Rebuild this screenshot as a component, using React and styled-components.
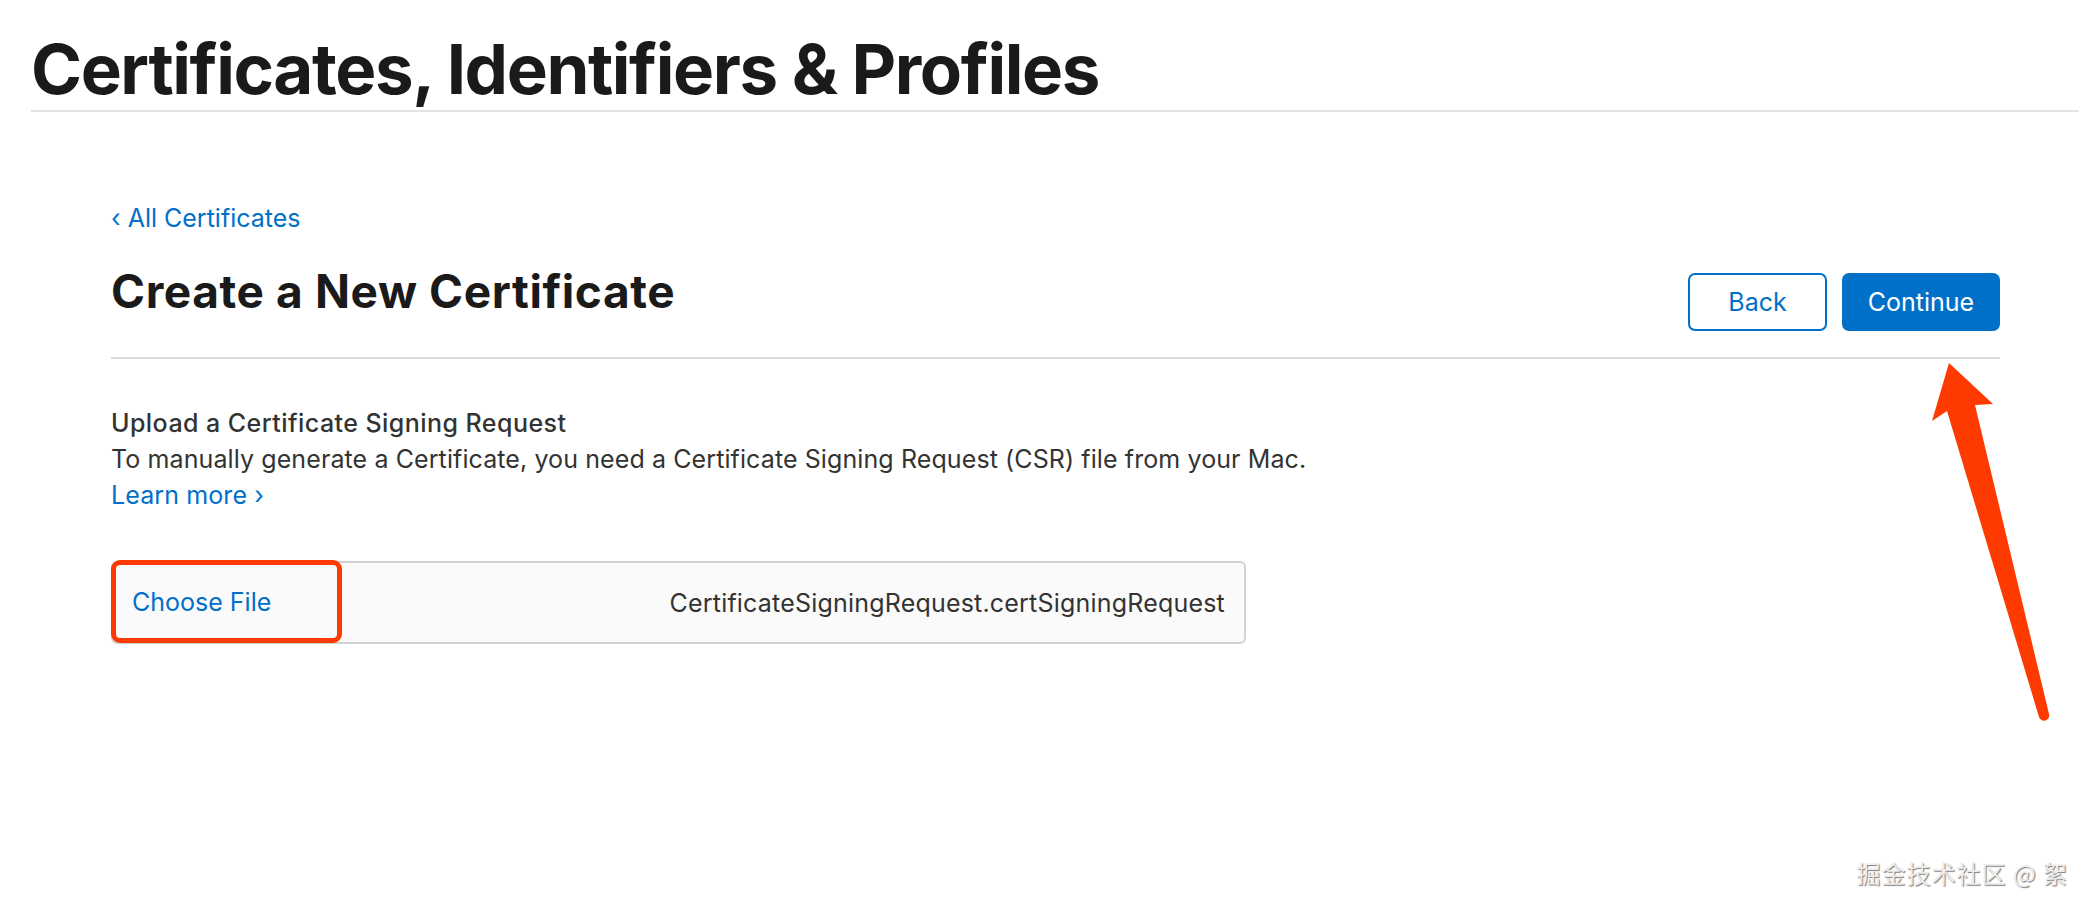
import React from "react";
import styled, { createGlobalStyle } from "styled-components";

const GlobalStyle = createGlobalStyle`
  body {
    margin: 0;
    background: #fff;
    font-family: "Inter", "Noto Sans", sans-serif;
    color: #333;
  }
`;

const Page = styled.div`
  position: relative;
  width: 2092px;
  height: 914px;
  overflow: hidden;
`;

const Header = styled.header`
  margin: 0 13px 0 31px;
  padding-top: 28px;
  border-bottom: 2px solid #e4e4e4;
`;

const PageTitle = styled.h1`
  margin: 0;
  font-size: 69px;
  line-height: 82px;
  font-weight: 700;
  color: #1a1a1a;
  letter-spacing: -1.4px;
`;

const Main = styled.main`
  padding: 0 92px 0 111px;
`;

const BackLink = styled.a`
  display: inline-block;
  margin-top: 88px;
  font-size: 25px;
  line-height: 36px;
  color: #0070c9;
  text-decoration: none;
`;

const TitleRow = styled.div`
  display: flex;
  justify-content: space-between;
  align-items: flex-end;
  margin-top: 27px;
  padding-bottom: 26px;
  border-bottom: 2px solid #dcdcdc;
`;

const SectionTitle = styled.h2`
  margin: 0 0 12px;
  font-size: 46px;
  line-height: 56px;
  font-weight: 700;
  color: #1a1a1a;
  letter-spacing: 0.6px;
`;

const Buttons = styled.div`
  display: flex;
  gap: 15px;
`;

const Button = styled.button`
  height: 58px;
  min-width: ${(p) => p.$w}px;
  padding: 0 20px;
  border-radius: 7px;
  border: 2px solid #0070c9;
  background: ${(p) => (p.$primary ? "#0070c9" : "#fff")};
  color: ${(p) => (p.$primary ? "#fff" : "#0070c9")};
  font-family: inherit;
  font-size: 25px;
  cursor: pointer;
`;

const Upload = styled.section`
  margin-top: 46px;
  font-size: 25px;
  line-height: 36px;
  letter-spacing: 0.1px;
`;

const UploadTitle = styled.div`
  font-weight: 500;
  color: #333;
  letter-spacing: 0.45px;
`;

const Text = styled.div`
  color: #333;
`;

const Link = styled.a`
  color: #0070c9;
  text-decoration: none;
`;

const FileBox = styled.div`
  display: flex;
  align-items: center;
  justify-content: space-between;
  box-sizing: border-box;
  width: 1135px;
  height: 83px;
  margin-top: 48px;
  border: 2px solid #d2d2d2;
  border-radius: 6px;
  background: #fafafa;
  font-size: 25px;
`;

const ChooseFile = styled.label`
  display: flex;
  align-items: center;
  box-sizing: border-box;
  width: 231px;
  height: 83px;
  margin: -2px 0 0 -2px;
  padding-left: 16px;
  border: 5px solid #fe3a00;
  border-radius: 9px;
  color: #0070c9;
  cursor: pointer;
`;

const FileName = styled.span`
  padding-right: 19px;
  color: #333;
  letter-spacing: 0.2px;
`;

const Arrow = styled.svg`
  position: absolute;
  left: 1920px;
  top: 350px;
`;

const Watermark = styled.div`
  position: absolute;
  right: 24px;
  bottom: 24px;
  font-family: "Noto Sans CJK SC", sans-serif;
  font-size: 24px;
  letter-spacing: 1px;
  color: #ececec;
  text-shadow: 1px 1px 1px #7a7a7a;
`;

export default function App() {
  return (
    <Page>
      <GlobalStyle />
      <Header>
        <PageTitle>Certificates, Identifiers &amp; Profiles</PageTitle>
      </Header>
      <Main>
        <BackLink href="#">‹ All Certificates</BackLink>
        <TitleRow>
          <SectionTitle>Create a New Certificate</SectionTitle>
          <Buttons>
            <Button $w={139}>Back</Button>
            <Button $w={158} $primary>
              Continue
            </Button>
          </Buttons>
        </TitleRow>
        <Upload>
          <UploadTitle>Upload a Certificate Signing Request</UploadTitle>
          <Text>
            To manually generate a Certificate, you need a Certificate Signing
            Request (CSR) file from your Mac.
          </Text>
          <Link href="#">Learn more ›</Link>
        </Upload>
        <FileBox>
          <ChooseFile>Choose File</ChooseFile>
          <FileName>CertificateSigningRequest.certSigningRequest</FileName>
        </FileBox>
      </Main>
      <Arrow width="140" height="380" viewBox="1920 350 140 380">
        <path
          d="M1949,363 L1993,404 L1975,405 L2049,714 A5,5 0 0 1 2039,717 L1947,411 L1932,421 Z"
          fill="#fe3a00"
        />
      </Arrow>
      <Watermark>掘金技术社区 @ 絮</Watermark>
    </Page>
  );
}
